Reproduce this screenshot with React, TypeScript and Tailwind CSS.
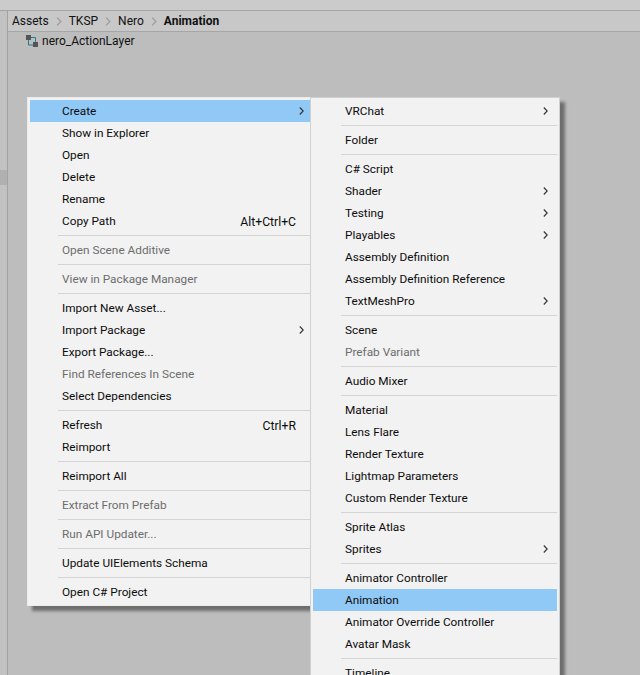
const font = "font-['Roboto',sans-serif]";

type Row = { label: string; hint?: string; arrow?: boolean; off?: boolean; on?: boolean } | "sep";

const leftMenu: Row[] = [
  { label: "Create", arrow: true, on: true },
  { label: "Show in Explorer" },
  { label: "Open" },
  { label: "Delete" },
  { label: "Rename" },
  { label: "Copy Path", hint: "Alt+Ctrl+C" },
  "sep",
  { label: "Open Scene Additive", off: true },
  "sep",
  { label: "View in Package Manager", off: true },
  "sep",
  { label: "Import New Asset..." },
  { label: "Import Package", arrow: true },
  { label: "Export Package..." },
  { label: "Find References In Scene", off: true },
  { label: "Select Dependencies" },
  "sep",
  { label: "Refresh", hint: "Ctrl+R" },
  { label: "Reimport" },
  "sep",
  { label: "Reimport All" },
  "sep",
  { label: "Extract From Prefab", off: true },
  "sep",
  { label: "Run API Updater...", off: true },
  "sep",
  { label: "Update UIElements Schema" },
  "sep",
  { label: "Open C# Project" },
];

const rightMenu: Row[] = [
  { label: "VRChat", arrow: true },
  "sep",
  { label: "Folder" },
  "sep",
  { label: "C# Script" },
  { label: "Shader", arrow: true },
  { label: "Testing", arrow: true },
  { label: "Playables", arrow: true },
  { label: "Assembly Definition" },
  { label: "Assembly Definition Reference" },
  { label: "TextMeshPro", arrow: true },
  "sep",
  { label: "Scene" },
  { label: "Prefab Variant", off: true },
  "sep",
  { label: "Audio Mixer" },
  "sep",
  { label: "Material" },
  { label: "Lens Flare" },
  { label: "Render Texture" },
  { label: "Lightmap Parameters" },
  { label: "Custom Render Texture" },
  "sep",
  { label: "Sprite Atlas" },
  { label: "Sprites", arrow: true },
  "sep",
  { label: "Animator Controller" },
  { label: "Animation", on: true },
  { label: "Animator Override Controller" },
  { label: "Avatar Mask" },
  "sep",
  { label: "Timeline" },
];

const Chevron = ({ className }: { className: string }) => (
  <svg viewBox="0 0 5 8" className={className} fill="none" stroke="currentColor" strokeWidth="1.1">
    <path d="M0.8 0.5l3.4 3.5-3.4 3.5" />
  </svg>
);

const Menu = ({ rows, className }: { rows: Row[]; className: string }) => (
  <div className={`absolute bg-[#f2f2f2] border p-[2px] shadow-[5px_5px_3px_rgba(0,0,0,0.42)] ${className}`}>
    {rows.map((row, i) =>
      row === "sep" ? (
        <div key={i} className="h-[7px] flex items-center pl-[28px]">
          <div className="h-px w-full bg-[#d4d4d4]" />
        </div>
      ) : (
        <div
          key={i}
          className={`h-[22px] flex items-center pl-[32px] text-[11.8px] ${row.on ? "bg-[#90c8f6]" : ""} ${row.off ? "text-[#6d6d6d]" : "text-[#0c0c0c]"}`}
        >
          <span className="flex-1 whitespace-nowrap pt-[2px]">{row.label}</span>
          {row.hint && <span className="mr-[17px] whitespace-nowrap text-[12.2px] pt-[2px]">{row.hint}</span>}
          {row.arrow && <Chevron className="w-[5px] h-[8px] mr-[9px] text-[#333333]" />}
        </div>
      )
    )}
  </div>
);

export default function App() {
  return (
    <div className={`relative w-[640px] h-[675px] overflow-hidden bg-[#bdbdbd] ${font}`}>
      <div className="h-[10px] bg-[#cbcbcb]" />
      <div className="flex h-[665px]">
        <div className="w-[8px] bg-[#c2c2c2] border-r border-t border-[#a3a3a3] flex flex-col">
          <div className="mt-[159px] h-[15px] bg-[#b0b0b0]" />
        </div>
        <div className="flex-1">
          <div className="h-[22px] bg-[#c8c8c8] border-t border-b border-[#a6a6a6] flex items-center pl-1 text-[12px] text-[#111111]">
            <span>Assets</span>
            <Chevron className="w-[6px] h-[9px] mx-[7px] text-[#9c9c9c]" />
            <span>TKSP</span>
            <Chevron className="w-[6px] h-[9px] mx-[7px] text-[#9c9c9c]" />
            <span>Nero</span>
            <Chevron className="w-[6px] h-[9px] mx-[7px] text-[#9c9c9c]" />
            <span className="font-bold">Animation</span>
          </div>
          <div className="flex items-center h-[18px] pl-[18px] gap-[4px] text-[12px] text-[#111111]">
            <svg viewBox="0 0 12 12" className="w-[12px] h-[12px]">
              <rect x="0" y="0" width="5" height="5" fill="#555555" />
              <rect x="7" y="7" width="5" height="5" fill="#555555" />
              <path d="M5 2.5h4.5V7M2.5 5v5H7" fill="none" stroke="#1f7f8f" strokeWidth="1" />
            </svg>
            <span>nero_ActionLayer</span>
          </div>
        </div>
      </div>
      <Menu rows={leftMenu} className="left-[27px] top-[97px] w-[289px] border-[#ececec]" />
      <Menu rows={rightMenu} className="left-[310px] top-[97px] w-[250px] border-[#d0d0d0]" />
    </div>
  );
}
